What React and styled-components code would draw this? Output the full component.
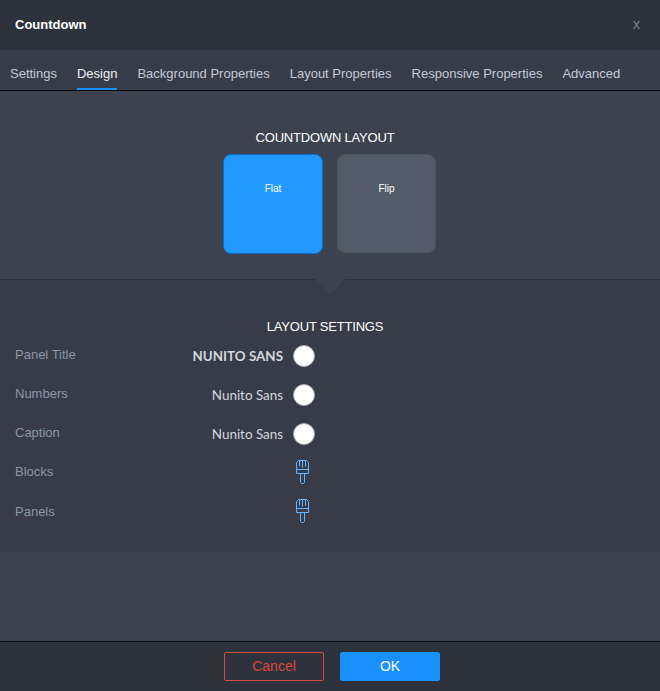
import React from "react";
import styled, { createGlobalStyle } from "styled-components";

const Global = createGlobalStyle`
  html, body { margin: 0; padding: 0; background: #3c424e; }
  body { font-family: "Liberation Sans", Arial, sans-serif; }
`;

const Modal = styled.div`
  width: 660px;
  height: 691px;
  display: flex;
  flex-direction: column;
  overflow: hidden;
  background: #3c424e;
`;

const Header = styled.div`
  height: 50px;
  flex: none;
  display: flex;
  align-items: center;
  justify-content: space-between;
  padding: 0 20px 2px 15px;
  box-sizing: border-box;
  background: #2e323c;
`;

const Title = styled.div`
  font-size: 13px;
  font-weight: 700;
  color: #fff;
`;

const Close = styled.div`
  font-size: 14px;
  color: #7b7f87;
`;

const Tabs = styled.div`
  height: 41px;
  flex: none;
  display: flex;
  gap: 20px;
  padding-left: 10px;
  box-sizing: border-box;
  background: #373c48;
  border-bottom: 1px solid #0b0c0f;
`;

const Tab = styled.div`
  height: 40px;
  box-sizing: border-box;
  padding-top: 16px;
  font-size: 13px;
  line-height: 16px;
  color: ${(p) => (p.$active ? "#eef1f5" : "#c3cad5")};
  border-bottom: 2px solid ${(p) => (p.$active ? "#1890ff" : "transparent")};
`;

const LayoutSection = styled.div`
  position: relative;
  height: 189px;
  flex: none;
  box-sizing: border-box;
  padding-top: 39px;
  background: #3c424e;
  border-bottom: 1px solid #2e323b;
`;

const SectionTitle = styled.div`
  padding-right: 10px;
  text-align: center;
  font-size: 13px;
  line-height: 16px;
  letter-spacing: -0.2px;
  color: #fff;
`;

const Choices = styled.div`
  display: flex;
  justify-content: center;
  gap: 14px;
  margin-top: 8px;
  padding-right: 1px;
`;

const Choice = styled.div`
  width: ${(p) => (p.$active ? 100 : 99)}px;
  height: ${(p) => (p.$active ? 100 : 99)}px;
  box-sizing: border-box;
  padding-top: 27px;
  text-align: center;
  font-size: 10px;
  line-height: 14px;
  color: #fff;
  border-radius: 8px;
  background: ${(p) => (p.$active ? "#2299ff" : "#535a68")};
  border: 1px solid ${(p) => (p.$active ? "#0d6ec4" : "#4d5461")};
`;

const Notch = styled.div`
  position: absolute;
  left: 315px;
  bottom: -15px;
  width: 0;
  height: 0;
  border-left: 15px solid transparent;
  border-right: 15px solid transparent;
  border-top: 15px solid #3c424e;
`;

const SettingsSection = styled.div`
  height: 272px;
  flex: none;
  box-sizing: border-box;
  padding-top: 39px;
  background: #373c48;
`;

const SettingsTitle = styled(SectionTitle)`
  margin-bottom: 1.5px;
`;

const Row = styled.div`
  height: 39.2px;
  display: grid;
  grid-template-columns: 150px 118px 32px;
  align-items: center;
  padding-left: 15px;
`;

const RowLabel = styled.div`
  font-size: 13px;
  color: #8b96a6;
  margin-top: -3.4px;
`;

const RowValue = styled.div`
  text-align: right;
  white-space: nowrap;
  font-family: Lato, "Noto Sans", sans-serif;
  font-size: 13.4px;
  font-weight: ${(p) => (p.$bold ? 700 : 400)};
  color: #d4d7dc;
`;

const Swatch = styled.div`
  justify-self: end;
  width: 20px;
  height: 20px;
  border-radius: 50%;
  background: #fff;
  border: 1px solid #a9acb2;
`;

const BrushSlot = styled.div`
  grid-column: 3;
  display: flex;
  justify-content: flex-end;
  padding-right: 6px;
  margin-top: -3px;
`;

const Spacer = styled.div`
  flex: 1;
`;

const Footer = styled.div`
  height: 50px;
  flex: none;
  display: flex;
  justify-content: center;
  align-items: center;
  gap: 16px;
  box-sizing: border-box;
  background: #2e323c;
  border-top: 1px solid #0b0c0f;
  padding: 0 0 1px 4px;
`;

const Button = styled.div`
  width: 100px;
  height: 29px;
  box-sizing: border-box;
  display: flex;
  align-items: center;
  justify-content: center;
  font-size: 14px;
  border-radius: 2px;
  color: ${(p) => (p.$primary ? "#fff" : "#d9483b")};
  background: ${(p) => (p.$primary ? "#1890ff" : "transparent")};
  border: 1px solid ${(p) => (p.$primary ? "#1890ff" : "#d9483b")};
`;

const Brush = () => (
  <svg width="13" height="24" viewBox="0 0 13 24" fill="none" stroke="#63b4ff" strokeWidth="1">
    <path d="M.5 13.5V2.5L2.5.5H10.5L12.5 2.5V13.5Z" />
    <path d="M.5 9.5H12.5" />
    <path d="M3.5 1V6.5M6.5 1V7.5M9.5 1V6.5" />
    <path d="M4.5 13.5V22.5L5.5 23.5H7.5L8.5 22.5V13.5" />
  </svg>
);

const rows = [
  { label: "Panel Title", font: "NUNITO SANS", bold: true },
  { label: "Numbers", font: "Nunito Sans" },
  { label: "Caption", font: "Nunito Sans" },
  { label: "Blocks" },
  { label: "Panels" },
];

const tabs = [
  "Settings",
  "Design",
  "Background Properties",
  "Layout Properties",
  "Responsive Properties",
  "Advanced",
];

export default function App() {
  return (
    <Modal>
      <Global />
      <Header>
        <Title>Countdown</Title>
        <Close>x</Close>
      </Header>
      <Tabs>
        {tabs.map((t) => (
          <Tab key={t} $active={t === "Design"}>
            {t}
          </Tab>
        ))}
      </Tabs>
      <LayoutSection>
        <SectionTitle>COUNTDOWN LAYOUT</SectionTitle>
        <Choices>
          <Choice $active>Flat</Choice>
          <Choice>Flip</Choice>
        </Choices>
        <Notch />
      </LayoutSection>
      <SettingsSection>
        <SettingsTitle>LAYOUT SETTINGS</SettingsTitle>
        {rows.map((r) => (
          <Row key={r.label}>
            <RowLabel>{r.label}</RowLabel>
            {r.font ? (
              <>
                <RowValue $bold={r.bold}>{r.font}</RowValue>
                <Swatch />
              </>
            ) : (
              <BrushSlot>
                <Brush />
              </BrushSlot>
            )}
          </Row>
        ))}
      </SettingsSection>
      <Spacer />
      <Footer>
        <Button>Cancel</Button>
        <Button $primary>OK</Button>
      </Footer>
    </Modal>
  );
}
